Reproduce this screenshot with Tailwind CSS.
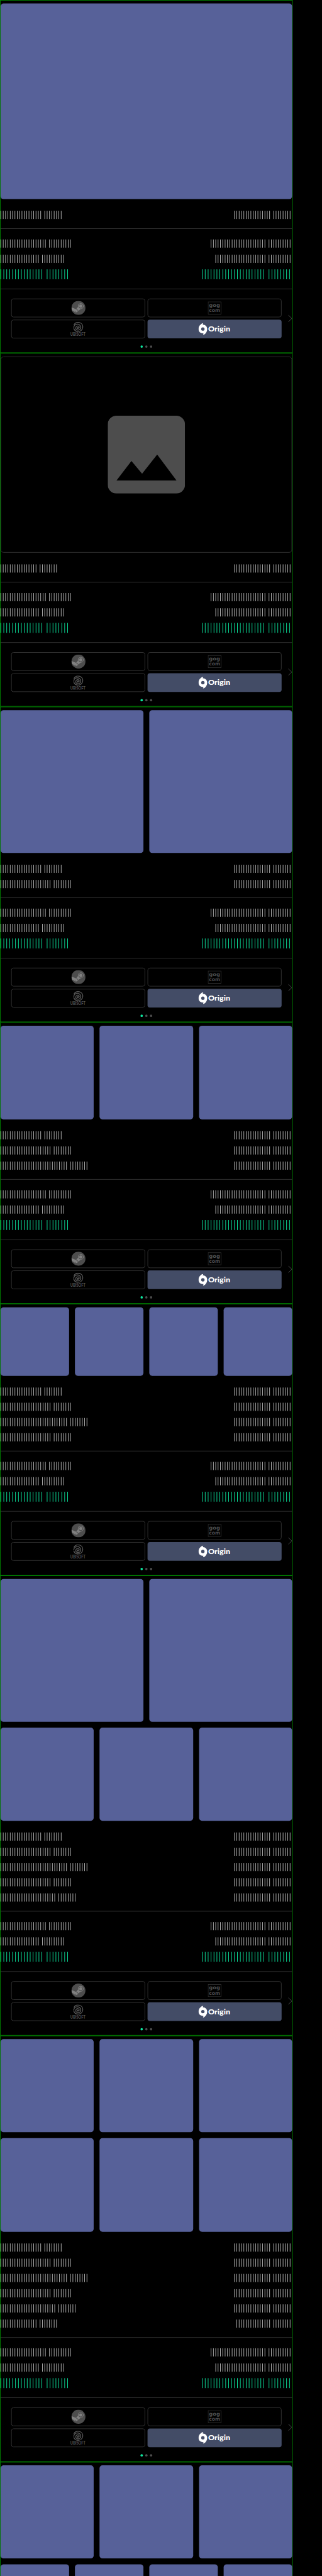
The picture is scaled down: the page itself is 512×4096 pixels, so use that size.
<!DOCTYPE html>
<html lang="en">
<head>
<meta charset="utf-8">
<title>Cards</title>
<script src="https://cdn.jsdelivr.net/npm/@tailwindcss/browser@4"></script>
</head>
<body class="bg-black">
<div class="h-[4096px] w-[512px] overflow-hidden bg-black">
  <main id="list" class="h-[4400px] w-[550px] origin-top-left scale-[0.930909] overflow-hidden"></main>
</div>

<svg class="hidden">
  <symbol id="steam" viewBox="0 0 24 24">
    <circle cx="12" cy="12" r="12" fill="#4d4d4d"/>
    <path d="M0.2 11 L8 14.2 L11.2 10.2 A4.9 4.9 0 1 1 15.8 13.9 L11.7 17 A3.7 3.7 0 0 1 4.8 18 L1 16 A12 12 0 0 1 .2 11Z" fill="#808080"/>
    <circle cx="16" cy="9" r="3.3" fill="#808080" stroke="#4d4d4d" stroke-width="1.2"/>
    <path d="M6.2 17.6 A2.6 2.6 0 1 0 8.4 14.8" fill="none" stroke="#4d4d4d" stroke-width="1"/>
  </symbol>
  <symbol id="gog" viewBox="0 0 23 22">
    <rect x=".5" y=".5" width="22" height="21" fill="none" stroke="#333"/>
    <text x="2" y="9" textLength="19" lengthAdjust="spacingAndGlyphs" font-family="DejaVu Sans" font-weight="700" font-size="8.5" fill="#4d4d4d">gog</text>
    <text x="2" y="18" textLength="19" lengthAdjust="spacingAndGlyphs" font-family="DejaVu Sans" font-weight="700" font-size="8.5" fill="#4d4d4d">com</text>
  </symbol>
  <symbol id="ubisoft" viewBox="0 0 26 24">
    <g fill="none" stroke="#555" stroke-width="1.5">
      <path d="M6.2 5.2 C8 1.6 12 .2 15.5 1 C19.5 2 21.8 5.6 21.2 9.6 C20.6 13.6 17.3 16.3 13.3 16.2 C9.8 16.1 7 14 6 11"/>
      <path d="M6.2 10.2 C5.5 6.8 8 4 11.3 3.7 C15 3.4 18 5.8 18 9.2 C18 12 15.8 13.9 13.1 13.8 C10.6 13.7 9.2 11.9 9.4 9.9 C9.6 7.8 11.5 6.6 13.3 6.9 C15 7.2 15.8 8.8 15.2 10.2"/>
    </g>
    <circle cx="13" cy="10.3" r="1.7" fill="#555"/>
    <text x="0" y="24" textLength="26" lengthAdjust="spacingAndGlyphs" font-family="Lato" font-weight="700" font-size="7.2" fill="#555">UBISOFT</text>
  </symbol>
  <symbol id="origin" viewBox="0 0 55 20">
    <path fill="#fff" fill-rule="evenodd" d="M8.3 0 C7.7 1.1 7.4 1.9 7.4 2.6 C11.6 2.4 14.9 5.8 14.9 10 C14.9 14.6 12.6 18 8.6 20 L7.6 19.8 C8.2 18.9 8.5 18.1 8.4 17.3 C4 17.8 0 14.5 0 10 C0 5.6 3.2 1.6 7.2 .2Z M7.5 7.1 A2.9 2.9 0 1 0 7.5 12.9 A2.9 2.9 0 1 0 7.5 7.1Z"/>
    <text x="16.6" y="14.2" textLength="37.6" lengthAdjust="spacingAndGlyphs" font-family="Lato" font-weight="900" font-size="13" fill="#fff">Origin</text>
  </symbol>
</svg>

<script>
// Bars: [first group, second group]
const words = (groups, cls) => cls === 'total'
  ? `<div class="flex h-[17px] gap-1">${groups.map(n => `<div class="flex gap-1 pr-1">${'<i class="h-full w-px bg-[#0ce8a0]"></i>'.repeat(n)}</div>`).join('')}</div>`
  : `<div class="flex h-3.5 gap-[3px]">${groups.map(n => `<div class="flex gap-[3px] pr-[3px]">${'<i class="h-full w-px bg-[#b4b4b4]"></i>'.repeat(n)}</div>`).join('')}</div>`;
const row = (l, r, cls) => `<div class="flex justify-between">${words(l, cls)}${words(r, cls)}</div>`;
const hr = '<div class="h-px bg-[#333333]"></div>';
const tile = '<div class="flex-1 rounded-[5px] bg-[#576199]"></div>';
const tiles = (n, h) => `<div class="flex gap-2.5 shrink-0" style="height:${h}px">${tile.repeat(n)}</div>`;
const placeholder = `<div class="flex h-[335px] items-center justify-center rounded-[5px] border border-[#333333]">
  <svg class="h-[133px] w-[132px]" viewBox="0 0 132 133"><path fill="#4d4d4d" fill-rule="evenodd" d="M15 0H117A15 15 0 0 1 132 15V118A15 15 0 0 1 117 133H15A15 15 0 0 1 0 118V15A15 15 0 0 1 15 0Z M15 110.6H117.5L84.5 66.5 58.7 99.2 40.5 77.4Z"/></svg></div>`;
const items = [
  [[18, 8], [16, 8]], [[22, 8], [16, 8]], [[29, 8], [16, 8]],
  [[22, 8], [16, 8]], [[24, 8], [16, 8]], [[16, 8], [15, 8]],
];
const box = 'flex h-8 items-center justify-center rounded border border-[#333333]';
const footer = `
  <div class="relative grid grid-cols-2 gap-1 px-[18px]">
    <div class="flex h-8 items-center justify-center rounded border border-[#333333]"><svg class="ml-px size-6"><use href="#steam"/></svg></div>
    <div class="flex h-8 items-center justify-center rounded border border-[#333333]"><svg class="h-[22px] w-[23px]"><use href="#gog"/></svg></div>
    <div class="flex h-8 items-center justify-center rounded border border-[#333333]"><svg class="mr-px h-6 w-[26px]"><use href="#ubisoft"/></svg></div>
    <div class="flex h-8 items-center justify-center rounded bg-[#434c66]"><svg class="h-5 w-[55px]"><use href="#origin"/></svg></div>
    <svg class="absolute right-0 top-[28px] h-3 w-[7px]" viewBox="0 0 7 12"><path d="M.5 .3 L6.4 6 .5 11.7" fill="none" stroke="#4d4d4d"/></svg>
  </div>
  <div class="mt-3 mb-2 flex justify-center gap-1">
    <i class="size-1 rounded-full bg-[#0ce8a0]"></i><i class="size-1 rounded-full bg-[#4d4d4d]"></i><i class="size-1 rounded-full bg-[#4d4d4d]"></i>
  </div>`;
const card = (media, list) => `
  <section class="w-[500px] border border-[#008000] pt-[5px]">
    <div class="flex flex-col gap-2.5">${media}</div>
    <div class="mt-5 mb-4 flex flex-col gap-3">${list.map(([l, r]) => row(l, r)).join('')}</div>
    ${hr}
    <div class="mt-[18px] flex flex-col gap-3">${row([20, 10], [24, 10])}${row([17, 10], [22, 10])}</div>
    <div class="mt-[11px] mb-4">${row([15, 8], [22, 8], 'total')}</div>
    ${hr}
    <div class="pt-4">${footer}</div>
  </section>`;
document.getElementById('list').innerHTML = [
  card(tiles(1, 334), items.slice(0, 1)),
  card(placeholder, [[[16, 8], [16, 8]]]),
  card(tiles(2, 244), items.slice(0, 2)),
  card(tiles(3, 160), items.slice(0, 3)),
  card(tiles(4, 117), items.slice(0, 4)),
  card(tiles(2, 244) + tiles(3, 159), items.slice(0, 5)),
  card(tiles(3, 159) + tiles(3, 160), items),
  card(tiles(3, 159) + tiles(4, 117), items),
].join('');
</script>
</body>
</html>
